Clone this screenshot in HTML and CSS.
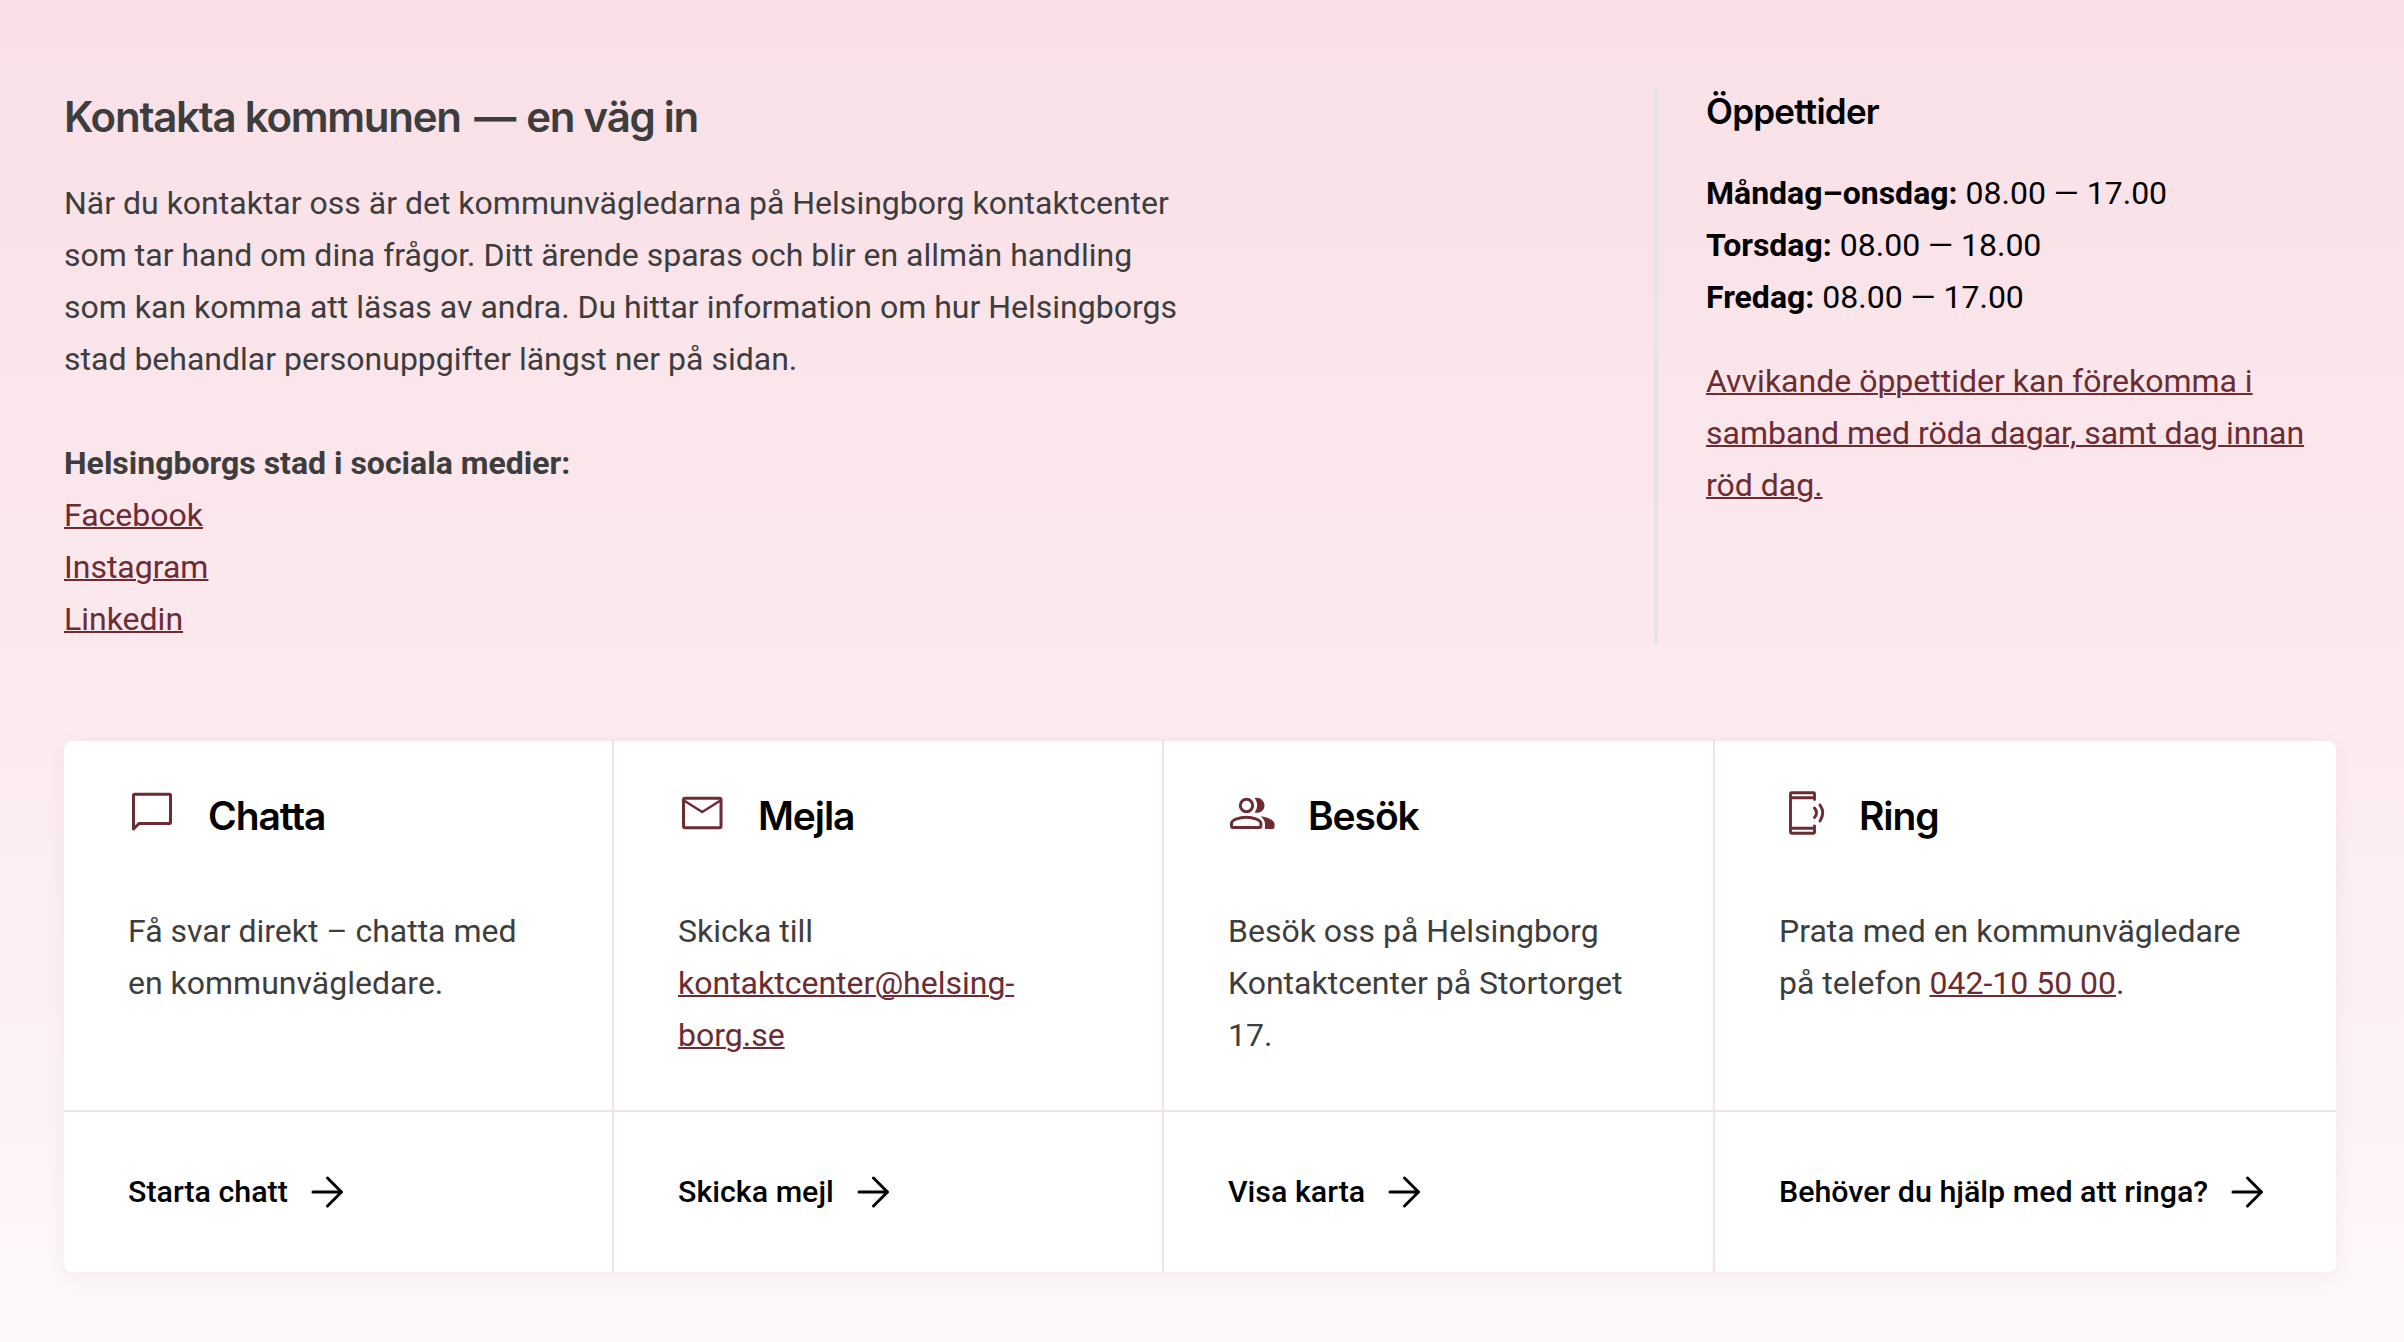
FILE: index.html
```html
<!DOCTYPE html>
<html lang="sv">
<head>
<meta charset="utf-8">
<title>Kontakta kommunen</title>
<link rel="stylesheet" href="styles.css">
</head>
<body>
<main class="page">
  <section class="intro">
    <div class="about">
      <h2 class="about-title">Kontakta kommunen <span class="dash">—</span> en väg in</h2>
      <p class="about-text">När du kontaktar oss är det kommunvägledarna på Helsingborg kontaktcenter<br>som tar hand om dina frågor. Ditt ärende sparas och blir en allmän handling<br>som kan komma att läsas av andra. Du hittar information om hur Helsingborgs<br>stad behandlar personuppgifter längst ner på sidan.</p>
      <p class="social"><strong>Helsingborgs stad i sociala medier:</strong><br><a href="#">Facebook</a><br><a href="#">Instagram</a><br><a href="#">Linkedin</a></p>
    </div>
    <aside class="hours">
      <h3 class="hours-title">Öppettider</h3>
      <p class="hours-list"><strong>Måndag–onsdag:</strong> 08.00 — 17.00<br><strong>Torsdag:</strong> 08.00 — 18.00<br><strong>Fredag:</strong> 08.00 — 17.00</p>
      <p class="hours-note"><a href="#">Avvikande öppettider kan förekomma i<br>samband med röda dagar, samt dag innan<br>röd dag.</a></p>
    </aside>
  </section>

  <section class="cards">
    <article class="card">
      <div class="card-body">
        <header class="card-head">
          <svg class="icon" viewBox="0 0 48 48" fill="none" stroke="currentColor" stroke-width="3" stroke-linejoin="round"><path d="M5.500 40V6.200Q5.500 5.200 6.500 5.200H41.500Q42.500 5.200 42.500 6.200V33.500Q42.500 34.500 41.500 34.500H11Z"/></svg>
          <h3 class="card-title">Chatta</h3>
        </header>
        <p class="card-text">Få svar direkt – chatta med<br>en kommunvägledare.</p>
      </div>
      <a class="action" href="#">Starta chatt <svg class="arrow" viewBox="0 0 32 32"><path d="M2 16H30.500M16.500 2L30.500 16L16.500 30"/></svg></a>
    </article>
    <article class="card">
      <div class="card-body">
        <header class="card-head">
          <svg class="icon" viewBox="0 0 48 48" fill="none" stroke="currentColor" stroke-width="3" stroke-linejoin="round"><rect x="5.500" y="9.200" width="37.500" height="29.500" rx="1.500"/><path d="M6 11.500L24.200 23L42.500 11.500" stroke-width="2.500"/></svg>
          <h3 class="card-title">Mejla</h3>
        </header>
        <p class="card-text">Skicka till<br><a href="#">kontaktcenter@helsing&shy;borg.se</a></p>
      </div>
      <a class="action" href="#">Skicka mejl <svg class="arrow" viewBox="0 0 32 32"><path d="M2 16H30.500M16.500 2L30.500 16L16.500 30"/></svg></a>
    </article>
    <article class="card">
      <div class="card-body">
        <header class="card-head">
          <svg class="icon" viewBox="0 0 48 48" fill="currentColor"><g fill="none" stroke="currentColor" stroke-width="3"><circle cx="18.500" cy="16.500" r="6.200"/><path d="M5 38.500Q3.500 38.500 3.500 37V34.500C3.500 30.500 12 28.200 18.200 28.200S32.900 30.500 32.900 34.500V37Q32.900 38.500 31.400 38.500Z"/></g><path d="M26.500 9C31.500 7.500 36.500 11.500 36.500 16.500S31.500 25 26.500 23.500C30 19.500 30 13 26.500 9ZM32.500 27.200C39 27.500 46.600 31 46.600 35.500V37.500Q46.600 40 44.500 40H37V35.500C37 32 35.500 29.500 32.500 27.200Z"/></svg>
          <h3 class="card-title">Besök</h3>
        </header>
        <p class="card-text">Besök oss på Helsingborg<br>Kontaktcenter på Stortorget<br>17.</p>
      </div>
      <a class="action" href="#">Visa karta <svg class="arrow" viewBox="0 0 32 32"><path d="M2 16H30.500M16.500 2L30.500 16L16.500 30"/></svg></a>
    </article>
    <article class="card card-wide">
      <div class="card-body">
        <header class="card-head">
          <svg class="icon" viewBox="0 0 48 48" fill="none" stroke="currentColor" stroke-width="2.900" stroke-linejoin="round" stroke-linecap="round"><path d="M35.500 10.500V4.800Q35.500 3.800 34.500 3.800H12.500Q11.500 3.800 11.500 4.800V43.200Q11.500 44.200 12.500 44.200H34.500Q35.500 44.200 35.500 43.200V37M11.500 8.800H35.500M11.500 39.200H35.500"/><path d="M35.500 19Q39.500 23.700 35.500 28.500M41 16Q46.500 23.700 41 32"/></svg>
          <h3 class="card-title">Ring</h3>
        </header>
        <p class="card-text">Prata med en kommunvägledare<br>på telefon <a href="#">042-10 50 00</a>.</p>
      </div>
      <a class="action" href="#">Behöver du hjälp med att ringa? <svg class="arrow" viewBox="0 0 32 32"><path d="M2 16H30.500M16.500 2L30.500 16L16.500 30"/></svg></a>
    </article>
  </section>
</main>
</body>
</html>
```
FILE: styles.css
```css
* { box-sizing: border-box; }

body {
  margin: 0;
  font-family: Roboto, "Liberation Sans", sans-serif;
  font-size: 32px;
  line-height: 52px;
  color: #3d3d3d;
}

h2, h3, p { margin: 0; }

a {
  color: #6d2b32;
  text-decoration-thickness: 2px;
}

.page {
  height: 1342px;
  padding: 86px 66px 0 64px;
  background: linear-gradient(180deg, #f8e0e6 0%, #fbe9ee 50%, #fef8f8 100%);
}

.intro {
  display: flex;
  justify-content: space-between;
  height: 558px;
  margin-bottom: 97px;
}

.about-title {
  padding-top: 1px;
  font: 600 42px/60px Inter, Roboto, sans-serif;
  letter-spacing: -1.25px;
  margin-bottom: 30px;
}

.dash {
  margin: 0 2px 0 4px;
}

.about-text { margin-bottom: 52px; }

.hours {
  width: 684px;
  padding-left: 48px;
  border-left: 4px solid #e5e5e5;
  color: #000;
}

.hours-title {
  font: 600 35px/50px Inter, Roboto, sans-serif;
  letter-spacing: -0.75px;
  margin-bottom: 31px;
}

.hours-list { margin-bottom: 32px; }

.cards {
  display: grid;
  grid-template-columns: 550px 550px 551px 621px;
  width: 2272px;
  height: 531px;
  background: #fff;
  border-radius: 8px;
  box-shadow: 0 4px 22px rgba(80, 20, 40, 0.05);
}

.card {
  display: flex;
  flex-direction: column;
  border-right: 2px solid #f4e0e6;
}

.card-wide { border-right: 0; }

.card-body {
  height: 371px;
  padding: 48px 62px 0 64px;
  border-bottom: 2px solid #f4e0e6;
}

.card-head {
  display: flex;
  height: 116px;
  gap: 32px;
}

.icon {
  width: 48px;
  height: 48px;
  color: #6d2b32;
}

.card-title {
  font: 600 39px/54px Inter, Roboto, sans-serif;
  letter-spacing: -1.1px;
  color: #000;
}

.action {
  display: flex;
  flex: 1;
  align-items: center;
  gap: 23px;
  padding-left: 64px;
  font-size: 30.4px;
  font-weight: 500;
  color: #000;
  text-decoration: none;
}

.arrow {
  width: 32px;
  height: 32px;
  fill: none;
  stroke: currentColor;
  stroke-width: 3;
  stroke-linecap: round;
  stroke-linejoin: round;
}
```
